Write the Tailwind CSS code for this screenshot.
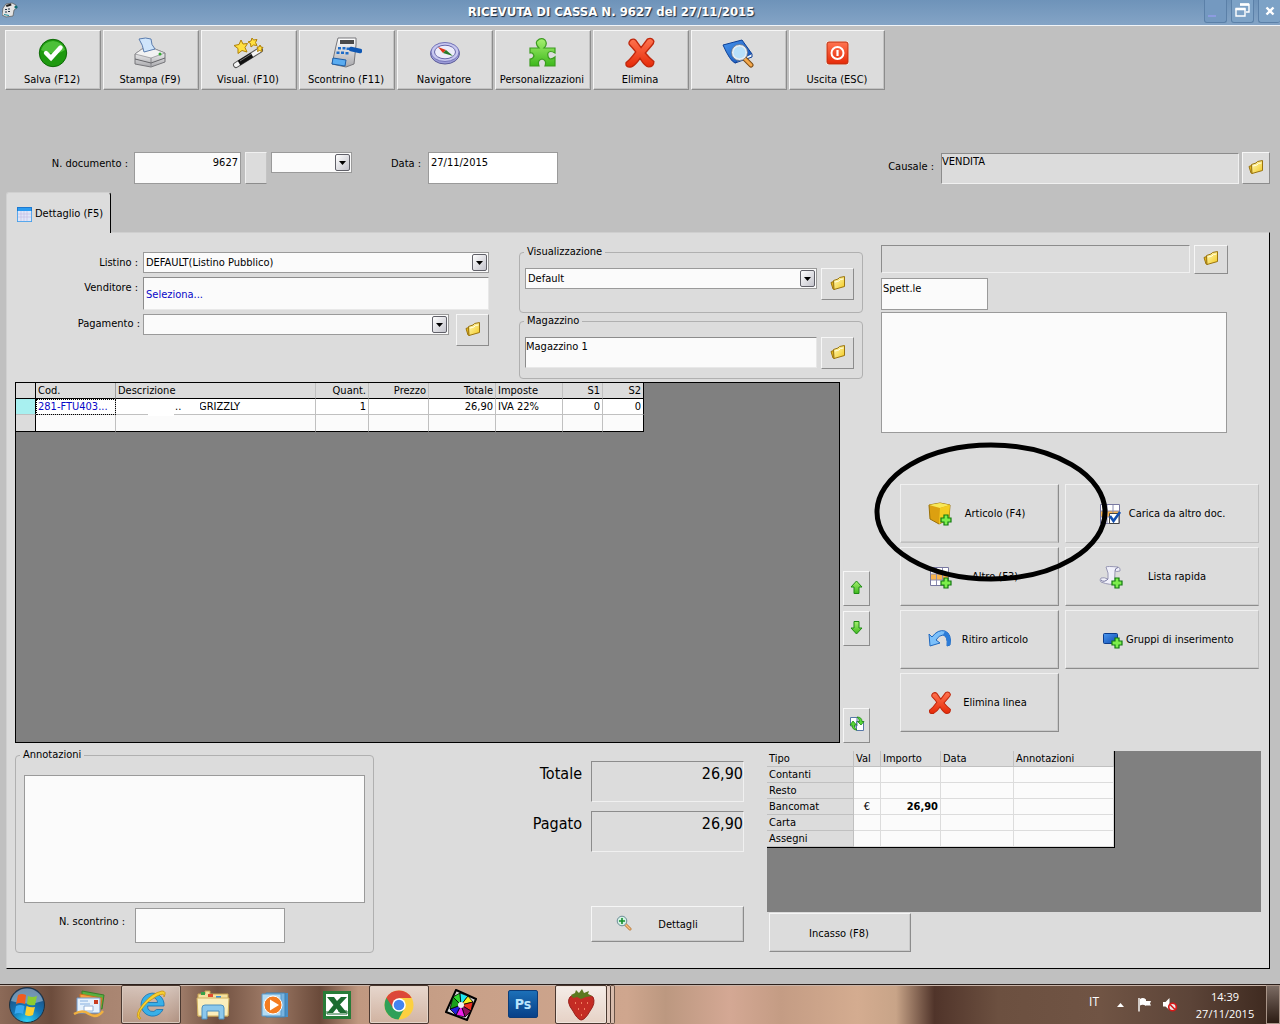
<!DOCTYPE html>
<html lang="it">
<head>
<meta charset="utf-8">
<title>Ricevuta di cassa</title>
<script src="https://cdn.jsdelivr.net/npm/@tailwindcss/browser@4"></script>
</head>
<body class="flex min-h-screen flex-col bg-[#c0c0c0] font-['DejaVu_Sans_Condensed','DejaVu_Sans',sans-serif] text-[11px] leading-[14px] text-black">

<!-- Shared icons -->
<svg class="absolute h-0 w-0" aria-hidden="true">
  <defs>
    <linearGradient id="gYellow" x1="0" y1="0" x2="1" y2="1"><stop offset="0" stop-color="#fffbc0"/><stop offset="1" stop-color="#f3c81c"/></linearGradient>
    <linearGradient id="gGreen" x1="0" y1="0" x2="0" y2="1"><stop offset="0" stop-color="#a6f070"/><stop offset="1" stop-color="#3db81c"/></linearGradient>
    <linearGradient id="gRed" x1="0" y1="0" x2="0" y2="1"><stop offset="0" stop-color="#ff7450"/><stop offset="1" stop-color="#e62a08"/></linearGradient>
    <linearGradient id="gBlue" x1="0" y1="0" x2="1" y2="1"><stop offset="0" stop-color="#4a98f0"/><stop offset="1" stop-color="#0f4ab0"/></linearGradient>
    <linearGradient id="gGrey" x1="0" y1="0" x2="0" y2="1"><stop offset="0" stop-color="#ffffff"/><stop offset="1" stop-color="#a8a8ac"/></linearGradient>
    <symbol id="folder" viewBox="0 0 16 16">
      <path d="M1 7.500 L3.500 6.500 L4.500 14.500 L3 14 Z" fill="#e8b818" stroke="#9a7410" stroke-width="1"/>
      <path d="M3.500 5.500 L8 4 L9.500 2.500 L14.500 1.500 V11.500 L4 14.500 Z" fill="url(#gYellow)" stroke="#9a7410" stroke-width="1"/>
      <path d="M5 7 L9 6 L10.500 4.500 L13.500 4" fill="none" stroke="#fffde0"/>
    </symbol>
    <symbol id="cross" viewBox="0 0 30 30">
      <path d="M6 3 Q9 1 11 3 L16 10 L22 2 Q26 0 28 4 Q28 6 26 8 L20 15 Q24 20 28 23 Q28 28 23 28 Q20 28 15 20 Q11 26 7 28 Q1 29 2 24 Q6 21 11 14 Q8 10 5 7 Q4 5 6 3 Z" fill="url(#gRed)" stroke="#c0270c" stroke-width="1.300"/>
    </symbol>
    <symbol id="plus" viewBox="0 0 12 12">
      <path d="M4 1 H8 V4 H11 V8 H8 V11 H4 V8 H1 V4 H4 Z" fill="#7cee4c" stroke="#127a10" stroke-width="1.200"/>
    </symbol>
  </defs>
</svg>

<header class="relative flex h-[26px] shrink-0 items-start justify-end border-b border-[#f0f4f8] bg-linear-to-b from-[#6e93b9] to-[#84a4c6]">
  <svg class="absolute top-[2px] left-[2px] h-4 w-4" viewBox="0 0 16 16"><path d="M1 6 L4 2 L10 1 L14 3 L15 6 L12 8 L11 14 L4 15 L0 13 Z" fill="#e4e4e4" stroke="#555" stroke-width=".7"/><path d="M4 3 L9 1.500 L9.500 3.500 L4.500 5Z" fill="#222"/><path d="M3 7h2v1H3zM6 6.500h2v1H6zM3 9.500h2v1H3zM6 9h2v1H6z" fill="#234"/><circle cx="14" cy="5" r="1.600" fill="#0c6c74"/><path d="M2 12l5 1v1l-5-1z" fill="#1a8a9a"/></svg>
  <h1 class="absolute inset-x-0 top-1 pr-[58px] text-center text-[13px] leading-4 font-bold text-white [text-shadow:1px_1px_1px_#1c2c40]">RICEVUTA DI CASSA N. 9627 del 27/11/2015</h1>
  <div class="relative flex gap-1">
    <button aria-label="Riduci" class="flex h-[23px] w-[23px] rounded-b-[3px] border border-t-0 border-[#5b80a8] bg-[#7499c0]"><span class="mt-[15px] ml-[3px] h-[2px] w-2 bg-[#8c9ce0]"></span></button>
    <button aria-label="Ripristina" class="flex h-[23px] w-[23px] items-start justify-center rounded-b-[3px] border border-t-0 border-[#5b80a8] bg-[#7da2c6] pt-[3px]"><svg class="h-[15px] w-[15px]" viewBox="0 0 15 15"><path d="M5 1.500H14V9H11" fill="none" stroke="#fff" stroke-width="1.400"/><path d="M5 1.500H14" stroke="#fff" stroke-width="2.600"/><path d="M1 6H10V13H1Z" fill="none" stroke="#fff" stroke-width="1.400"/><path d="M.5 6H10.500" stroke="#fff" stroke-width="2.600"/></svg></button>
    <button aria-label="Chiudi" class="flex h-[23px] w-[22px] items-start justify-center rounded-b-[3px] border border-t-0 border-r-0 border-[#5b80a8] bg-[#7da2c6] pt-[6px]"><svg class="h-[10px] w-[10px]" viewBox="0 0 10 10"><path d="M1.500 1.500L8.500 8.500M8.500 1.500L1.500 8.500" stroke="#fff" stroke-width="2.400"/></svg></button>
  </div>
</header>

<main class="flex flex-1 flex-col pr-[10px] pb-[15px]">
  <!-- Toolbar -->
  <nav class="flex gap-[2px] pt-1 pl-[5px]">
    <button class="flex h-[60px] w-24 flex-col items-center justify-between border border-t-[#f6f6f6] border-r-[#8c8c8c] border-b-[#8c8c8c] border-l-[#f6f6f6] bg-[#dcdcdc] pt-[6px] pr-[2px] pb-[2px] shadow-[inset_-1px_-1px_#c2c2c2]">
      <svg class="h-8 w-8" viewBox="0 0 32 32"><circle cx="17" cy="16" r="13.700" fill="#1f9a10" stroke="#0f6a08"/><path d="M5 13A12.500 12.500 0 0 1 29 13Q18 20 5 13" fill="#4cc038"/><path d="M10 16L15 21L24.500 10.500" fill="none" stroke="#fff" stroke-width="4.400" stroke-linecap="round"/></svg>
      <span>Salva (F12)</span></button>
    <button class="flex h-[60px] w-24 flex-col items-center justify-between border border-t-[#f6f6f6] border-r-[#8c8c8c] border-b-[#8c8c8c] border-l-[#f6f6f6] bg-[#dcdcdc] pt-[6px] pr-[2px] pb-[2px] shadow-[inset_-1px_-1px_#c2c2c2]">
      <svg class="h-8 w-8" viewBox="0 0 32 32"><path d="M1 17L8 12H21L31 16V25L17 30L1 27Z" fill="url(#gGrey)" stroke="#77777b"/><path d="M1 17L8 12H21L31 16L17 21Z" fill="#f2f2f2" stroke="#88888c" stroke-width=".7"/><path d="M17 21V30" fill="none" stroke="#88888c"/><path d="M1 22L17 26L31 21" fill="none" stroke="#66666a"/><path d="M5 2Q12 0 17 2Q17 8 21 12L10 15Q9 8 5 2Z" fill="#cfe5fb" stroke="#5a7cae"/><circle cx="26" cy="17" r="1.500" fill="#3a3"/></svg>
      <span>Stampa (F9)</span></button>
    <button class="flex h-[60px] w-24 flex-col items-center justify-between border border-t-[#f6f6f6] border-r-[#8c8c8c] border-b-[#8c8c8c] border-l-[#f6f6f6] bg-[#dcdcdc] pt-[6px] pr-[2px] pb-[2px] shadow-[inset_-1px_-1px_#c2c2c2]">
      <svg class="h-8 w-8" viewBox="0 0 32 32"><path d="M4 28L28 13" stroke="#555" stroke-width="6" stroke-linecap="round"/><path d="M4 28L28 13" stroke="#f4f4f4" stroke-width="4" stroke-linecap="round"/><path d="M7 26L20 18" stroke="#111" stroke-width="5"/><path d="M8 24L19 17" stroke="#777" stroke-width="1"/><g fill="#ffe040" stroke="#b08008" stroke-width="1"><path d="M9 3L11 7L15.500 6.500L13 10.500L15 15L10 13.500L6 16.500L6 11.500L2 8.500L7 7.500Z"/><path d="M20 1L21.500 3L25 2.500L23.500 5.500L25 8.500L21.500 8L19 10L18.500 6.500L16 5L19 4Z"/><path d="M28 8L29 10L31 10.500L29.500 12L30 14.500L27.500 13.500L25.500 14.500L26 12L25 10L27 10Z"/></g></svg>
      <span>Visual. (F10)</span></button>
    <button class="flex h-[60px] w-24 flex-col items-center justify-between border border-t-[#f6f6f6] border-r-[#8c8c8c] border-b-[#8c8c8c] border-l-[#f6f6f6] bg-[#dcdcdc] pt-[6px] pr-[2px] pb-[2px] shadow-[inset_-1px_-1px_#c2c2c2]">
      <svg class="h-8 w-8" viewBox="0 0 32 32"><path d="M8 1H26V8L24 27L16 30L2 27L6 9Z" fill="url(#gGrey)" stroke="#77777b"/><path d="M10 3H24V7H10Z" fill="#4a4a4a"/><g fill="#1e6cc8"><rect x="8" y="10" width="3" height="2.500"/><rect x="12.500" y="10" width="3" height="2.500"/><rect x="16.500" y="10.500" width="2.500" height="2.500"/><rect x="6.500" y="14.500" width="3" height="2.500"/><rect x="11" y="14.500" width="3" height="2.500"/><rect x="15.500" y="15" width="3" height="2.500"/></g><path d="M3 21L16 23L15 29L2 27Z" fill="#5aacf0" stroke="#1d5ea8"/><path d="M21 12L30 14" stroke="#0f58b4" stroke-width="4.500" stroke-linecap="round"/></svg>
      <span>Scontrino (F11)</span></button>
    <button class="flex h-[60px] w-24 flex-col items-center justify-between border border-t-[#f6f6f6] border-r-[#8c8c8c] border-b-[#8c8c8c] border-l-[#f6f6f6] bg-[#dcdcdc] pt-[6px] pr-[2px] pb-[2px] shadow-[inset_-1px_-1px_#c2c2c2]">
      <svg class="h-8 w-8" viewBox="0 0 32 32"><ellipse cx="17" cy="16.500" rx="14.500" ry="10.500" fill="#9c9cd8" stroke="#5c5c98"/><ellipse cx="17" cy="15" rx="14" ry="9.500" fill="#c8c8f0" stroke="#7474b8"/><ellipse cx="17" cy="15" rx="10.500" ry="6.800" fill="#ececfa" stroke="#6868a8"/><path d="M10 10L18 13L15 16Z" fill="#e03418"/><path d="M18 13L25 19L15 16Z" fill="#287a28"/></svg>
      <span>Navigatore</span></button>
    <button class="flex h-[60px] w-24 flex-col items-center justify-between border border-t-[#f6f6f6] border-r-[#8c8c8c] border-b-[#8c8c8c] border-l-[#f6f6f6] bg-[#dcdcdc] pt-[6px] pr-[2px] pb-[2px] shadow-[inset_-1px_-1px_#c2c2c2]">
      <svg class="h-8 w-8" viewBox="0 0 32 32"><path d="M4 11H13Q9 7 11 4Q15 0 19 3Q22 7 18 11H29V16Q24 13 22 16Q21 20 24 22Q27 22 29 20V29H19Q21 23 16 22Q11 23 13 29H4V22Q7 22 8 19Q7 15 4 16Z" fill="url(#gGreen)" stroke="#3c9c20" stroke-width="1.200"/></svg>
      <span>Personalizzazioni</span></button>
    <button class="flex h-[60px] w-24 flex-col items-center justify-between border border-t-[#f6f6f6] border-r-[#8c8c8c] border-b-[#8c8c8c] border-l-[#f6f6f6] bg-[#dcdcdc] pt-[6px] pr-[2px] pb-[2px] shadow-[inset_-1px_-1px_#c2c2c2]">
      <svg class="h-8 w-8"><use href="#cross"/></svg>
      <span>Elimina</span></button>
    <button class="flex h-[60px] w-24 flex-col items-center justify-between border border-t-[#f6f6f6] border-r-[#8c8c8c] border-b-[#8c8c8c] border-l-[#f6f6f6] bg-[#dcdcdc] pt-[6px] pr-[2px] pb-[2px] shadow-[inset_-1px_-1px_#c2c2c2]">
      <svg class="h-8 w-8" viewBox="0 0 32 32"><path d="M1 8L20 3L30 17L13 26Q8 24 1 8Z" fill="url(#gBlue)" stroke="#0c3f96"/><path d="M13 26L30 20V17" fill="#f4f4f4" stroke="#0c3f96"/><path d="M22 21L29 28" stroke="#7a4a14" stroke-width="5" stroke-linecap="round"/><path d="M22 21L29 28" stroke="#f4a84c" stroke-width="3" stroke-linecap="round"/><circle cx="17.500" cy="15.500" r="7" fill="#b8e0fa" stroke="#e8eef4" stroke-width="2"/><circle cx="17.500" cy="15.500" r="8" fill="none" stroke="#6a7480" stroke-width=".8"/></svg>
      <span>Altro</span></button>
    <button class="flex h-[60px] w-24 flex-col items-center justify-between border border-t-[#f6f6f6] border-r-[#8c8c8c] border-b-[#8c8c8c] border-l-[#f6f6f6] bg-[#dcdcdc] pt-[6px] pb-[2px] shadow-[inset_-1px_-1px_#c2c2c2]">
      <svg class="h-8 w-8" viewBox="0 0 32 32"><rect x="5" y="4" width="23" height="24" rx="3" fill="#fff0e8"/><rect x="6" y="5" width="21" height="22" rx="2" fill="url(#gRed)" stroke="#b83010"/><circle cx="16.500" cy="16" r="6" fill="none" stroke="#fff" stroke-width="2"/><path d="M16.500 13V19" stroke="#fff" stroke-width="2.200"/></svg>
      <span>Uscita (ESC)</span></button>
  </nav>

  <!-- Document header -->
  <div class="mt-[62px] flex items-start">
    <label for="ndoc" class="w-[128px] pt-[5px] text-right">N. documento :</label>
    <input id="ndoc" value="9627" class="ml-[6px] h-8 w-[107px] border border-[#9a9a9a] bg-[#fbfbfb] px-[2px] pb-[11px] text-right">
    <button aria-label="Serie" class="ml-1 h-8 w-[22px] border border-t-[#f0f0f0] border-r-[#c4c4c4] border-b-[#8c8c8c] border-l-[#f0f0f0] bg-[#dcdcdc]"></button>
    <div class="relative ml-1 h-[21px] w-[81px]">
      <select aria-label="Sezionale" class="h-full w-full appearance-none border border-[#9a9a9a] bg-[#fbfbfb] pl-[2px]"><option></option></select>
      <span class="pointer-events-none absolute top-[2px] right-[2px] flex h-[17px] w-[15px] items-center justify-center rounded-[2px] border border-[#606068] bg-linear-to-br from-white to-[#c4c4cc]"><svg class="h-1 w-[7px]" viewBox="0 0 7 4"><path d="M0 0H7L3.500 4Z"/></svg></span>
    </div>
    <label for="data" class="ml-[39px] w-[31px] pt-[5px] whitespace-nowrap">Data :</label>
    <input id="data" value="27/11/2015" class="ml-[6px] h-8 w-[130px] border border-[#9a9a9a] bg-white px-[2px] pb-[11px]">
    <label for="causale" class="ml-auto pt-2 whitespace-nowrap">Causale :</label>
    <input id="causale" value="VENDITA" readonly class="mt-px ml-[7px] h-[31px] w-[298px] border border-t-[#8c8c8c] border-r-[#f0f0f0] border-b-[#f0f0f0] border-l-[#8c8c8c] bg-[#dcdcdc] pb-[14px]">
    <button aria-label="Scegli causale" class="ml-[3px] flex h-8 w-7 items-center justify-center border border-t-[#f6f6f6] border-r-[#8c8c8c] border-b-[#8c8c8c] border-l-[#f6f6f6] bg-[#dcdcdc] pb-[2px]"><svg class="h-4 w-4"><use href="#folder"/></svg></button>
  </div>

  <!-- Tab -->
  <button class="relative z-10 mt-2 ml-[6px] flex h-[41px] w-[105px] shrink-0 items-center gap-[3px] rounded-t-[3px] border-t border-r border-l border-t-[#d0d0d0] border-r-black border-l-[#d0d0d0] bg-[#dcdcdc] pt-[2px] pl-[10px] whitespace-nowrap">
    <svg class="h-[15px] w-[15px] shrink-0" viewBox="0 0 15 15"><rect x=".5" y=".5" width="14" height="14" fill="#dfe6f8" stroke="#1c78d0"/><rect x="1" y="1" width="13" height="3" fill="#2c9cf0"/><path d="M4 4V14M7 4V14M10 4V14M1 7H14M1 10H14" stroke="#c4b8e0" stroke-width=".6"/><path d="M.5 4V14.500H14.500V4" fill="none" stroke="#58a8ec"/></svg>
    <span>Dettaglio (F5)</span>
  </button>

  <section class="-mt-px ml-[6px] flex flex-1 flex-col border border-t-[#cfcfcf] border-r-black border-b-black border-l-[#d0d0d0] bg-[#dcdcdc] px-2 pt-3 pb-[15px]">
    <div class="flex flex-1 gap-[11px]">
      <!-- Left side -->
      <div class="flex min-w-0 flex-1 flex-col">
        <div class="flex pr-[7px]">
          <div class="flex flex-1 flex-col gap-1 pt-[7px]">
            <div class="flex">
              <label for="listino" class="w-32 shrink-0 pt-1 pr-[5px] text-right">Listino :</label>
              <div class="relative h-[21px] flex-1">
                <select id="listino" class="h-full w-full appearance-none border border-[#9a9a9a] bg-[#fbfbfb] pt-px pl-[2px]"><option>DEFAULT(Listino Pubblico)</option></select>
                <span class="pointer-events-none absolute top-[2px] right-[2px] flex h-[17px] w-[15px] items-center justify-center rounded-[2px] border border-[#606068] bg-linear-to-br from-white to-[#c4c4cc]"><svg class="h-1 w-[7px]" viewBox="0 0 7 4"><path d="M0 0H7L3.500 4Z"/></svg></span>
              </div>
            </div>
            <div class="flex">
              <label for="venditore" class="w-32 shrink-0 pt-1 pr-[5px] text-right">Venditore :</label>
              <input id="venditore" value="Seleziona..." class="h-[33px] min-w-0 flex-1 border border-t-[#8c8c8c] border-r-[#e8e8e8] border-b-[#e8e8e8] border-l-[#8c8c8c] bg-[#fbfbfb] pt-px pl-[2px] text-[#0808c8]">
            </div>
            <div class="flex">
              <label for="pagamento" class="w-32 shrink-0 pt-[3px] pr-[3px] text-right">Pagamento :</label>
              <div class="relative h-[21px] flex-1">
                <select id="pagamento" class="h-full w-full appearance-none border border-[#9a9a9a] bg-[#fbfbfb] pl-[2px]"><option></option></select>
                <span class="pointer-events-none absolute top-[2px] right-[2px] flex h-[17px] w-[15px] items-center justify-center rounded-[2px] border border-[#606068] bg-linear-to-br from-white to-[#c4c4cc]"><svg class="h-1 w-[7px]" viewBox="0 0 7 4"><path d="M0 0H7L3.500 4Z"/></svg></span>
              </div>
              <button aria-label="Scegli pagamento" class="ml-[7px] flex h-8 w-[33px] items-center justify-center border border-t-[#f6f6f6] border-r-[#8c8c8c] border-b-[#8c8c8c] border-l-[#f6f6f6] pb-[2px]"><svg class="h-4 w-4"><use href="#folder"/></svg></button>
            </div>
          </div>
          <div class="ml-[30px] flex w-[344px] flex-col gap-px">
            <fieldset class="h-[68px] rounded-[4px] border border-[#b0b0b0] pl-[5px]">
              <legend class="ml-[-1px] px-[3px]">Visualizzazione</legend>
              <div class="flex gap-1 pt-[9px]">
                <div class="relative h-[21px] w-[292px]">
                  <select aria-label="Visualizzazione" class="h-full w-full appearance-none border border-[#9a9a9a] bg-[#fbfbfb] pt-px pl-[2px]"><option>Default</option></select>
                  <span class="pointer-events-none absolute top-[2px] right-[2px] flex h-[17px] w-[15px] items-center justify-center rounded-[2px] border border-[#606068] bg-linear-to-br from-white to-[#c4c4cc]"><svg class="h-1 w-[7px]" viewBox="0 0 7 4"><path d="M0 0H7L3.500 4Z"/></svg></span>
                </div>
                <button aria-label="Scegli visualizzazione" class="flex h-8 w-[33px] items-center justify-center border border-t-[#f6f6f6] border-r-[#8c8c8c] border-b-[#8c8c8c] border-l-[#f6f6f6] pb-[2px]"><svg class="h-4 w-4"><use href="#folder"/></svg></button>
              </div>
            </fieldset>
            <fieldset class="h-[65px] rounded-[4px] border border-[#b0b0b0] pl-[5px]">
              <legend class="ml-[-1px] px-[3px]">Magazzino</legend>
              <div class="flex gap-1 pt-[9px]">
                <input aria-label="Magazzino" value="Magazzino 1" class="h-[31px] w-[292px] border border-t-[#8c8c8c] border-r-[#e8e8e8] border-b-[#e8e8e8] border-l-[#8c8c8c] bg-[#fbfbfb] pb-[13px]">
                <button aria-label="Scegli magazzino" class="flex h-8 w-[33px] items-center justify-center border border-t-[#f6f6f6] border-r-[#8c8c8c] border-b-[#8c8c8c] border-l-[#f6f6f6] pb-[2px]"><svg class="h-4 w-4"><use href="#folder"/></svg></button>
              </div>
            </fieldset>
          </div>
        </div>

        <div class="mt-[3px] flex flex-1 gap-[3px]">
          <div class="min-w-0 flex-1 border border-black bg-[#808080]">
            <table class="w-[628px] table-fixed border-separate border-spacing-0">
              <colgroup><col class="w-5"><col class="w-20"><col class="w-[200px]"><col class="w-[53px]"><col class="w-[60px]"><col class="w-[67px]"><col class="w-[67px]"><col class="w-10"><col class="w-[41px]"></colgroup>
              <thead>
                <tr class="h-4 bg-[#dcdcdc] text-left [&>th]:border-r [&>th]:border-b [&>th]:border-b-black [&>th]:px-[2px] [&>th]:pt-px [&>th]:pb-0 [&>th]:font-normal">
                  <th class="border-r-black"></th><th class="border-r-[#a0a0a0]">Cod.</th><th class="border-r-[#c0c0c0]">Descrizione</th><th class="border-r-[#c0c0c0] text-right">Quant.</th><th class="border-r-[#c0c0c0] text-right">Prezzo</th><th class="border-r-[#c0c0c0] text-right">Totale</th><th class="border-r-[#c0c0c0]">Imposte</th><th class="border-r-[#c0c0c0] text-right">S1</th><th class="border-r-black text-right">S2</th>
                </tr>
              </thead>
              <tbody>
                <tr class="h-4 bg-white [&>td]:border-r [&>td]:border-b [&>td]:border-b-[#c0c0c0] [&>td]:px-[2px] [&>td]:pt-px [&>td]:pb-0">
                  <td class="border-r-black bg-[#a8f0f0]"></td>
                  <td class="border-r-[#c0c0c0] whitespace-nowrap text-[#0808c8] outline-1 -outline-offset-1 outline-dotted outline-black">281-FTU403...</td>
                  <td class="relative border-r-[#c0c0c0]"><div class="flex"><span class="ml-[57px] w-6">..</span><span>GRIZZLY</span></div><span class="absolute top-0 left-[81px] h-[15px] w-[3px] bg-white"></span><span class="absolute top-[15px] left-8 h-[2px] w-[26px] bg-white"></span></td>
                  <td class="border-r-[#c0c0c0] text-right">1</td><td class="border-r-[#c0c0c0]"></td><td class="border-r-[#c0c0c0] text-right">26,90</td><td class="border-r-[#c0c0c0]">IVA 22%</td><td class="border-r-[#c0c0c0] text-right">0</td><td class="border-r-black text-right">0</td>
                </tr>
                <tr class="h-[17px] bg-[#fbfbfb] [&>td]:border-r [&>td]:border-b [&>td]:border-r-[#c0c0c0] [&>td]:border-b-black [&>td]:p-0">
                  <td class="!border-r-black bg-[#dcdcdc]"></td><td></td><td></td><td></td><td></td><td></td><td></td><td></td><td class="!border-r-black"></td>
                </tr>
              </tbody>
            </table>
          </div>
          <div class="flex w-[27px] flex-col justify-end">
            <button aria-label="Sposta su" class="flex h-[35px] items-center justify-center border border-t-[#f6f6f6] border-r-[#8c8c8c] border-b-[#8c8c8c] border-l-[#f6f6f6] pb-[3px]"><svg class="h-[15px] w-[13px]" viewBox="0 0 13 15"><path d="M6.500 1L12 7H9V13.500H4V7H1Z" fill="url(#gGreen)" stroke="#1e8a14"/></svg></button>
            <button aria-label="Sposta giù" class="mt-[5px] flex h-[35px] items-center justify-center border border-t-[#f6f6f6] border-r-[#8c8c8c] border-b-[#8c8c8c] border-l-[#f6f6f6] pb-[3px]"><svg class="h-[15px] w-[13px]" viewBox="0 0 13 15"><path d="M6.500 14L12 8H9V1.500H4V8H1Z" fill="url(#gGreen)" stroke="#1e8a14"/></svg></button>
            <button aria-label="Aggiorna" class="mt-[62px] flex h-[35px] items-center justify-center border border-t-[#f6f6f6] border-r-[#8c8c8c] border-b-[#8c8c8c] border-l-[#f6f6f6] pb-[3px]"><svg class="h-4 w-4" viewBox="0 0 16 16"><path d="M1.500 1.500H8V10H1.500ZM7.500 5.500H14.500V14.500H7.500Z" fill="#fff" stroke="#5878a8"/><path d="M4 5L7.500 9H5.500V11Q6 13 8 14Q3 14 3 9H1Z" fill="#58d838" stroke="#1e8a14" stroke-width=".8"/><path d="M12 9L8.500 5.500H10.500Q10.500 3 8 1Q13 1 13 5.500H15Z" fill="#58d838" stroke="#1e8a14" stroke-width=".8"/></svg></button>
          </div>
        </div>
      </div>

      <!-- Customer and insert buttons -->
      <div class="w-[380px] shrink-0">
        <div class="flex gap-1">
          <input aria-label="Cliente" readonly class="h-[28px] w-[309px] border border-t-[#8c8c8c] border-r-[#f0f0f0] border-b-[#f0f0f0] border-l-[#8c8c8c] bg-[#dcdcdc]">
          <button aria-label="Scegli cliente" class="flex h-[29px] w-[34px] items-center justify-center border border-t-[#f6f6f6] border-r-[#8c8c8c] border-b-[#8c8c8c] border-l-[#f6f6f6] pb-[3px]"><svg class="h-4 w-4"><use href="#folder"/></svg></button>
        </div>
        <input aria-label="Intestazione" value="Spett.le" class="mt-1 block h-8 w-[107px] border border-[#9a9a9a] bg-[#fbfbfb] pb-[11px] pl-px">
        <textarea aria-label="Indirizzo" class="mt-[2px] block h-[121px] w-[346px] resize-none border border-[#9a9a9a] bg-[#fbfbfb]"></textarea>

        <div class="relative mt-[51px] ml-[19px] grid w-[359px] grid-cols-[159px_194px] gap-x-[6px] gap-y-1">
          <button class="flex h-[59px] items-center border border-t-[#f0f0f0] border-r-[#8c8c8c] border-b-[#c0c0c0] border-l-[#f0f0f0] pl-[27px] shadow-[inset_-1px_-1px_#cacaca]">
            <svg class="h-6 w-6 shrink-0" viewBox="0 0 24 24"><path d="M1 3L12 1L22 3L21 17L11 22L2 17Z" fill="#dca010" stroke="#9a7008"/><path d="M1 3L12 1L22 3L12 6Z" fill="#f8e858"/><path d="M12 6L22 3L21 17L11 22Z" fill="#f4cc20"/><use href="#plus" x="12" y="12" width="12" height="12"/></svg>
            <span class="ml-px w-[84px] pt-px text-center">Articolo (F4)</span></button>
          <button class="flex h-[59px] items-center border border-t-[#f0f0f0] border-r-[#c0c0c0] border-b-[#c0c0c0] border-l-[#f0f0f0] pl-[33px]">
            <svg class="h-6 w-6 shrink-0" viewBox="0 0 24 24"><path d="M1.500 2.500H20.500V21.500H1.500Z" fill="#fff" stroke="#7878a0"/><path d="M2 9H20V15H2Z" fill="#f8b450"/><path d="M8 3V21M14 3V21M2 9H20M2 15H20" stroke="#8c8cb0"/><path d="M10.500 11.500H20V21.500H10.500Z" fill="#fff" stroke="#444"/><path d="M11 14L14.500 19L21 10" fill="none" stroke="#1450b0" stroke-width="2.600"/></svg>
            <span class="ml-1 w-[100px] pt-px text-center whitespace-nowrap">Carica da altro doc.</span></button>
          <button class="flex h-[59px] items-center border border-t-[#f0f0f0] border-r-[#8c8c8c] border-b-[#8c8c8c] border-l-[#f0f0f0] pl-[27px] shadow-[inset_-1px_-1px_#cacaca]">
            <svg class="h-6 w-6 shrink-0" viewBox="0 0 24 24"><path d="M2.500 2.500H20.500V20.500H2.500Z" fill="#fff" stroke="#7878a0"/><path d="M3 9H20V15H3Z" fill="#f8b450"/><path d="M8.500 3V20M14.500 3V20M3 9H20M3 15H20" stroke="#8c8cb0"/><use href="#plus" x="12" y="12" width="12" height="12"/></svg>
            <span class="ml-px w-[84px] pt-px text-center">Altro (F3)</span></button>
          <button class="flex h-[59px] items-center border border-t-[#f0f0f0] border-r-[#c0c0c0] border-b-[#8c8c8c] border-l-[#f0f0f0] pl-[33px] shadow-[inset_0_-1px_#cacaca]">
            <svg class="h-6 w-6 shrink-0" viewBox="0 0 24 24"><path d="M7 2Q8 1 19 2Q22 3 21 6Q17 7 16 6Q15 12 17 18Q12 21 2 17Q0 15 2 13Q5 12 9 14Q10 8 7 2Z" fill="#f0f0fa" stroke="#9898b4"/><path d="M16 6Q16 3 19 2.500M2 15Q5 18 9 14" fill="none" stroke="#74749c"/><use href="#plus" x="12" y="12" width="12" height="12"/></svg>
            <span class="ml-1 w-[100px] pt-px text-center whitespace-nowrap">Lista rapida</span></button>
          <button class="flex h-[59px] items-center border border-t-[#f0f0f0] border-r-[#8c8c8c] border-b-[#8c8c8c] border-l-[#f0f0f0] pl-[27px] shadow-[inset_-1px_-1px_#cacaca]">
            <svg class="h-6 w-6 shrink-0" viewBox="0 0 24 24"><path d="M1 6L4 9Q10 1 17 3Q24 6 22 17L19 18Q20 8 15 7Q11 7 8 12L12 15L2 18Z" fill="#7cc0fa" stroke="#1e68c0" stroke-linejoin="round"/><path d="M17 3Q24 6 22 17L19 18Q20 8 15 7Z" fill="#2c7cd8"/></svg>
            <span class="ml-px w-[84px] pt-px text-center">Ritiro articolo</span></button>
          <button class="flex h-[59px] items-center border border-t-[#f0f0f0] border-r-[#c0c0c0] border-b-[#8c8c8c] border-l-[#f0f0f0] pl-[33px] shadow-[inset_0_-1px_#cacaca]">
            <svg class="h-6 w-6 shrink-0" viewBox="0 0 24 24"><rect x="4.500" y="5.500" width="14" height="10" rx="1" fill="url(#gBlue)" stroke="#0c3c8c"/><use href="#plus" x="12" y="9" width="12" height="12"/></svg>
            <span class="ml-[3px] pt-px whitespace-nowrap">Gruppi di inserimento</span></button>
          <button class="flex h-[59px] items-center border border-t-[#f0f0f0] border-r-[#8c8c8c] border-b-[#8c8c8c] border-l-[#f0f0f0] pl-[27px] shadow-[inset_-1px_-1px_#cacaca]">
            <svg class="h-6 w-6 shrink-0"><use href="#cross"/></svg>
            <span class="ml-px w-[84px] pt-px text-center">Elimina linea</span></button>
          <!-- Hand-drawn highlight round the "Articolo" button -->
          <svg class="pointer-events-none absolute top-[-42px] left-[-26px] h-[140px] w-[234px]" viewBox="0 0 234 140"><ellipse cx="117" cy="70" rx="114" ry="67" fill="none" stroke="#000" stroke-width="5"/></svg>
        </div>
      </div>
    </div>

    <!-- Bottom row -->
    <div class="mt-[5px] flex h-[205px] shrink-0 items-start">
      <fieldset class="h-[205px] w-[358px] shrink-0 rounded-[4px] border border-[#b0b0b0] px-2">
        <legend class="ml-[-4px] px-[3px]">Annotazioni</legend>
        <textarea aria-label="Annotazioni" class="mt-[13px] block h-32 w-[341px] resize-none border border-[#9a9a9a] bg-[#fbfbfb]"></textarea>
        <div class="mt-[5px] flex">
          <label for="scontrino" class="w-[101px] pt-[7px] text-right">N. scontrino :</label>
          <input id="scontrino" class="ml-[10px] h-[35px] w-[150px] border border-[#9a9a9a] bg-[#fbfbfb]">
        </div>
      </fieldset>

      <div class="flex flex-1 flex-col items-end pt-[13px] text-[16px] leading-5">
        <div class="flex"><label for="totale" class="mr-[9px] pt-[3px]">Totale</label><input id="totale" readonly value="26,90" class="h-[41px] w-[153px] border border-t-[#8c8c8c] border-r-[#f0f0f0] border-b-[#f0f0f0] border-l-[#8c8c8c] pb-4 text-right"></div>
        <div class="mt-[9px] flex"><label for="pagato" class="mr-[9px] pt-[3px]">Pagato</label><input id="pagato" readonly value="26,90" class="h-[41px] w-[153px] border border-t-[#8c8c8c] border-r-[#f0f0f0] border-b-[#f0f0f0] border-l-[#8c8c8c] pb-4 text-right"></div>
        <button class="mt-[54px] flex h-9 w-[153px] items-center border border-t-[#f6f6f6] border-r-[#8c8c8c] border-b-[#8c8c8c] border-l-[#f6f6f6] pl-6 text-[11px] leading-[14px] shadow-[inset_-1px_-1px_#cacaca]">
          <svg class="mb-[3px] h-4 w-4" viewBox="0 0 16 16"><path d="M9 9L14 14" stroke="#b87838" stroke-width="3" stroke-linecap="round"/><path d="M9 9L14 14" stroke="#f8c080" stroke-width="1.400" stroke-linecap="round"/><circle cx="6" cy="6" r="4.800" fill="#d4f0e4" stroke="#6c8c98"/><path d="M6 3V9M3 6H9" stroke="#14902c" stroke-width="1.600"/></svg>
          <span class="w-[92px] pt-[2px] text-center">Dettagli</span></button>
      </div>

      <div class="ml-[23px] w-[494px] shrink-0 pt-[3px]">
        <div class="h-[161px] bg-[#808080]">
          <table class="w-[348px] table-fixed border-separate border-spacing-0 border-r border-b border-black [&_td]:border-r [&_td]:border-b [&_td]:border-[#dcdcdc] [&_td]:bg-[#fbfbfb] [&_td]:px-[2px] [&_td]:pt-px [&_td]:pb-0 [&_th]:border-r [&_th]:border-b [&_th]:border-[#c0c0c0] [&_th]:bg-[#dcdcdc] [&_th]:px-[2px] [&_th]:pt-px [&_th]:pb-0 [&_th]:text-left [&_th]:font-normal">
            <colgroup><col class="w-[87px]"><col class="w-[27px]"><col class="w-[60px]"><col class="w-[73px]"><col class="w-[100px]"></colgroup>
            <thead><tr class="h-4"><th>Tipo</th><th>Val</th><th>Importo</th><th>Data</th><th>Annotazioni</th></tr></thead>
            <tbody>
              <tr class="h-4"><th>Contanti</th><td></td><td></td><td></td><td></td></tr>
              <tr class="h-4"><th>Resto</th><td></td><td></td><td></td><td></td></tr>
              <tr class="h-4"><th>Bancomat</th><td class="text-center">€</td><td class="text-right font-bold">26,90</td><td></td><td></td></tr>
              <tr class="h-4"><th>Carta</th><td></td><td></td><td></td><td></td></tr>
              <tr class="h-4"><th>Assegni</th><td></td><td></td><td></td><td></td></tr>
            </tbody>
          </table>
        </div>
        <button class="mt-px ml-[2px] h-[39px] w-[142px] border border-t-[#f6f6f6] border-r-[#8c8c8c] border-b-[#8c8c8c] border-l-[#f6f6f6] pt-[2px] pr-[2px] shadow-[inset_-1px_-1px_#cacaca]">Incasso (F8)</button>
      </div>
    </div>
  </section>
</main>

<!-- Taskbar -->
<footer class="flex h-10 shrink-0 items-stretch border-t border-[#2c201c] bg-[linear-gradient(90deg,#8c6a58_0%,#6c4c3c_4%,#a88470_8%,#b08c78_13%,#705040_17%,#a07c68_21%,#6a4a3a_25%,#c09880_28%,#c8a088_36%,#cfa68e_49%,#bc9880_52%,#d4a894_57%,#c49c84_61%,#d4ac90_67%,#c8a488_70%,#50342a_73%,#6c5040_78%,#705444_86%,#5c4438_93%,#3a261c_100%)] shadow-[inset_0_1px_#c8b4a8]">
  <button aria-label="Start" class="flex w-[59px] items-center pl-2"><svg class="h-[38px] w-[38px]" viewBox="0 0 38 38"><defs><radialGradient id="orb" cx=".5" cy="1" r="1"><stop offset="0" stop-color="#30d8f8"/><stop offset=".45" stop-color="#1478b8"/><stop offset="1" stop-color="#20406c"/></radialGradient></defs><circle cx="19" cy="19" r="17.500" fill="url(#orb)" stroke="#20303c"/><path d="M3 15A16.500 16.500 0 0 1 35 15Q20 20 3 15" fill="#b8ccd8" opacity=".55"/><path d="M10 9Q14 7 18 9L17 18Q12 16 8 18Z" fill="#f05c20"/><path d="M20 10Q24 12 29 10L27 19Q22 20 19 18Z" fill="#8ccc30"/><path d="M8 20Q12 18 16.500 20L15 28Q11 26 6.500 28Z" fill="#38a8f0"/><path d="M18.500 20Q23 22 27 21L25 29Q21 31 17 29Z" fill="#fcd030"/></svg></button>
  <div class="flex gap-[2px]">
    <button aria-label="Posta" class="flex w-[60px] items-center justify-center"><svg class="h-8 w-8" viewBox="0 0 32 32"><path d="M9 2L31 6L29 20L9 16Z" fill="#58b040" stroke="#388028"/><path d="M7 5L29 9L27 22L7 18Z" fill="#f8a040" stroke="#c87020"/><path d="M4 9H27V24H4Z" fill="#e4f0fc" stroke="#7098c8"/><path d="M7 12H15M7 15H17" stroke="#88b0e0"/><path d="M21 11H25V15H21Z" fill="#c83c20"/><path d="M11 17H20V22H11Z" fill="#fff" stroke="#90b0d8"/><path d="M1 25Q10 20 16 25Q24 30 30 22" fill="none" stroke="#f0b040" stroke-width="2.500"/></svg></button>
    <button aria-label="Internet Explorer" class="flex w-[60px] items-center justify-center rounded-[2px] border border-[#4a3830] bg-linear-to-b from-white/50 to-white/15 shadow-[inset_0_0_0_1px_#d8c8bc]"><svg class="h-8 w-8" viewBox="0 0 32 32"><path d="M28 20.500A11.500 11.500 0 1 1 29 17H12.500A5 5 0 0 0 21.500 20.500ZM12.500 13.500H22.500A5 5 0 0 0 12.500 13.500Z" fill="#38b0e8" stroke="#1470b0" stroke-width=".8"/><path d="M4 30Q-1 26 8 15Q17 4 27 2Q32 2 29 8Q30 3 22 7Q12 12 6 21Q2 28 6 29Q5 31 4 30Z" fill="#f8d030" stroke="#c89410" stroke-width=".8"/></svg></button>
    <button aria-label="Esplora risorse" class="flex w-[60px] items-center justify-center"><svg class="h-8 w-[34px]" viewBox="0 0 34 32"><path d="M2 5H9V2H14V5H32V27H2Z" fill="#f4e0a0" stroke="#c8a450"/><path d="M5 3H9V6H5Z" fill="#38a048"/><path d="M12 5H17V8H12Z" fill="#e04c30"/><path d="M20 7H25V10H20Z" fill="#3890d8"/><path d="M1 9H33L32 27H2Z" fill="#fbeebc" stroke="#d0b060"/><path d="M6 30V19Q6 16 9 16H25Q28 16 28 19V30H23V22H11V30Z" fill="#8cc8ec" stroke="#4c90c0"/></svg></button>
    <button aria-label="Media Player" class="flex w-[60px] items-center justify-center"><svg class="h-7 w-7" viewBox="0 0 28 28"><path d="M8 2H27V26H8Z" fill="#4890c8"/><path d="M5 2H24V26H5Z" fill="#78b4e0" stroke="#4080b0"/><path d="M1 3H20V25H1Z" fill="#b4dcf4" stroke="#5898c8"/><circle cx="12" cy="14" r="9" fill="#f47c20" stroke="#fff"/><path d="M9 8.500L18 14L9 19.500Z" fill="#fff"/></svg></button>
    <button aria-label="Excel" class="flex w-[60px] items-center justify-center"><svg class="h-7 w-7" viewBox="0 0 28 28"><rect width="28" height="28" fill="#287c38"/><rect x="3" y="3" width="22" height="22" fill="#fff"/><path d="M4 6H11L14 10L18 6H24L17 13.500L24 22H17L13.500 17.500L10 22H4L10.500 14Z" fill="#1c6c30"/><path d="M15 20H24V23H4V20" fill="none" stroke="#1c6c30"/></svg></button>
    <button aria-label="Chrome" class="flex w-[60px] items-center justify-center rounded-[2px] border border-[#4a3830] bg-linear-to-b from-white/60 to-white/25 shadow-[inset_0_0_0_1px_#e4d4c8]"><svg class="h-[30px] w-[30px]" viewBox="0 0 30 30"><circle cx="15" cy="15" r="14.500" fill="#fcd040"/><path d="M15 15L2.400 7.800A14.500 14.500 0 0 0 14.500 29.500L20 19Z" fill="#30a058"/><path d="M2.400 7.800A14.500 14.500 0 0 1 27.600 8H15L9 18Z" fill="#dc4838"/><circle cx="15" cy="15" r="6.800" fill="#fff"/><circle cx="15" cy="15" r="5.300" fill="#4484f0"/></svg></button>
    <button aria-label="Album foto" class="flex w-[60px] items-center justify-center"><svg class="h-8 w-8" viewBox="0 0 32 32"><path d="M11 1L31 10L22 31L1 23Z" fill="#d8d8d8" stroke="#000" stroke-width="2"/><g stroke="#000" stroke-width=".8"><path d="M16 16L8 8L15 4Z" fill="#30d830"/><path d="M16 16L15 4L23 7Z" fill="#20e8f0"/><path d="M16 16L23 7L28 13Z" fill="#f8f020"/><path d="M16 16L28 13L26 22Z" fill="#f03020"/><path d="M16 16L26 22L20 28Z" fill="#901060"/><path d="M16 16L20 28L11 26Z" fill="#f020f0"/><path d="M16 16L11 26L5 20Z" fill="#2020e0"/><path d="M16 16L5 20L8 8Z" fill="#18a018"/></g><circle cx="16" cy="16" r="3" fill="#eee"/></svg></button>
    <button aria-label="Photoshop" class="flex w-[60px] items-center justify-center pb-[2px]"><span class="flex h-7 w-[30px] items-center justify-center rounded-[2px] border border-[#0c3c78] bg-linear-to-b from-[#1c70b8] to-[#084088] text-[14px] font-bold text-[#b8e4fc]">Ps</span></button>
    <div class="flex">
      <button aria-label="Gestionale" class="flex w-[52px] items-center justify-center rounded-[2px] border border-[#4a3830] bg-linear-to-b from-white/80 to-white/50 shadow-[inset_0_0_0_1px_#f0e4dc]"><svg class="h-8 w-7" viewBox="0 0 28 32"><path d="M3 8Q8 4 14 7Q20 4 26 8Q29 14 23 22Q18 31 14 31Q10 30 6 22Q-1 13 3 8Z" fill="#c42c24" stroke="#98201c"/><path d="M4 6L8 4L9 1L12 4L15 0L17 4L22 2L21 5L25 7L19 8L14 10L10 8L6 9Z" fill="#5c7820"/><path d="M8 13h1v2H8zM14 13h1v2h-1zM20 13h1v2h-1zM11 19h1v2h-1zM17 19h1v2h-1zM14 25h1v2h-1z" fill="#f08060"/></svg></button>
      <span class="w-1 rounded-r-[2px] border border-l-0 border-[#4a3830] bg-[#e4ccc0]"></span>
      <span class="w-1 rounded-r-[2px] border border-l-0 border-[#6a5448] bg-[#d8bcac]"></span>
    </div>
  </div>
  <div class="ml-auto flex font-['Open_Sans',sans-serif] text-[12px] text-white">
    <span class="pt-[10px]">IT</span>
    <svg class="mt-[18px] ml-[18px] h-1 w-[7px]" viewBox="0 0 7 4"><path d="M0 4H7L3.500 0Z" fill="#fff"/></svg>
    <svg class="mt-[12px] ml-[14px] h-[15px] w-[14px]" viewBox="0 0 14 15"><path d="M1 1V14.500" stroke="#fff" stroke-width="1.400"/><path d="M2 2Q5 0 8 2.500V9Q5 7 2 8.500ZM8 4H13L12 6.500L13 8.500H8Z" fill="#fff"/></svg>
    <svg class="mt-[12px] ml-[11px] h-[15px] w-[14px]" viewBox="0 0 14 15"><path d="M0 5H2.500L6.500 1V13L2.500 9.500H0Z" fill="#fff"/><circle cx="9.500" cy="10" r="3.800" fill="#e8e8e8" stroke="#d81818" stroke-width="1.600"/><path d="M7 7.500L12 12.500" stroke="#d81818" stroke-width="1.600"/></svg>
    <div class="ml-[17px] w-[62px] pt-[3px] text-center text-[11px] leading-[17px]"><div>14:39</div><div>27/11/2015</div></div>
    <button aria-label="Mostra desktop" class="ml-[10px] w-[14px] border border-[#a89488] bg-linear-to-b from-[#7c6c64] to-[#2c1c14]"></button>
  </div>
</footer>
</body>
</html>
